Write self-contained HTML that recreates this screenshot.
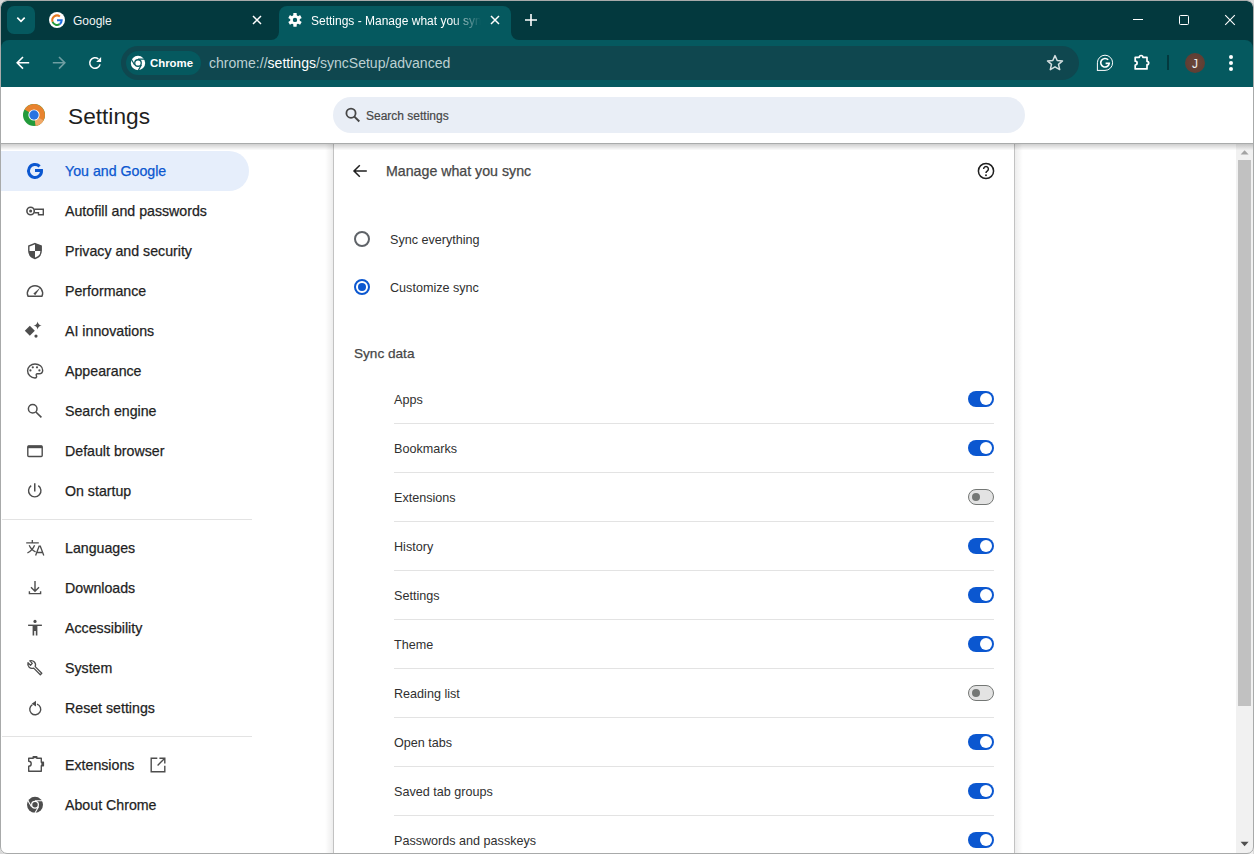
<!DOCTYPE html>
<html><head><meta charset="utf-8">
<style>
*{box-sizing:border-box;margin:0;padding:0}
html,body{width:1254px;height:854px;overflow:hidden;background:#d9d9d9;font-family:"Liberation Sans",sans-serif}
.a{position:absolute}
.t{white-space:nowrap}
svg{position:absolute;overflow:visible}
</style></head><body>
<div class="a" style="left:0px;top:0px;width:1254px;height:854px;background:#fff;border-radius:7px"></div>
<div class="a" style="left:1px;top:1px;width:1252px;height:52px;background:#03393e;border-radius:6px 6px 0 0"></div>
<div class="a" style="left:7px;top:6px;width:28px;height:28px;background:#05595f;border-radius:7px"></div>
<svg style="left:10px;top:10px" width="22" height="22" viewBox="10 10 22 22"><path d="M17.3 17.6L21 21.3L24.7 17.6" stroke="#fff" stroke-width="1.6" fill="none"/></svg>
<svg style="left:48px;top:11px" width="18" height="18" viewBox="48 11 18 18"><circle cx="57" cy="20" r="8" fill="#fff"/><path d="M59.89 16.5A4.7 4.7 0 0 0 52.61 21.88" stroke="#e67a22" stroke-width="2" fill="none"/><path d="M52.61 21.88A4.7 4.7 0 0 0 59.63 24.10" stroke="#239a3b" stroke-width="2" fill="none"/><path d="M59.63 24.10A4.7 4.7 0 0 0 61.7 20.2H57" stroke="#1f6fe0" stroke-width="2" fill="none"/></svg>
<div class="a t" style="left:73px;top:13.44px;font-size:12px;line-height:16px;color:#f1f4f4">Google</div>
<svg style="left:250px;top:13px" width="14" height="14" viewBox="250 13 14 14"><path d="M253 16L261 24M261 16L253 24" stroke="#fff" stroke-width="1.5"/></svg>
<div class="a" style="left:279px;top:6px;width:232px;height:40px;background:#05595f;border-radius:8px 8px 0 0"></div>
<svg style="left:270px;top:26px" width="260" height="16" viewBox="270 26 260 16"><path d="M271 41V40A8 8 0 0 0 279 32V41Z" fill="#05595f"/><path d="M519 41V40A8 8 0 0 1 511 32V41Z" fill="#05595f"/></svg>
<svg style="left:286px;top:11px" width="18" height="18" viewBox="286 11 18 18"><rect x="293.3" y="13.099999999999998" width="3.4" height="3.6" rx="0.4" transform="rotate(0 295 19.9)" fill="#fff"/><rect x="293.3" y="13.099999999999998" width="3.4" height="3.6" rx="0.4" transform="rotate(60 295 19.9)" fill="#fff"/><rect x="293.3" y="13.099999999999998" width="3.4" height="3.6" rx="0.4" transform="rotate(120 295 19.9)" fill="#fff"/><rect x="293.3" y="13.099999999999998" width="3.4" height="3.6" rx="0.4" transform="rotate(180 295 19.9)" fill="#fff"/><rect x="293.3" y="13.099999999999998" width="3.4" height="3.6" rx="0.4" transform="rotate(240 295 19.9)" fill="#fff"/><rect x="293.3" y="13.099999999999998" width="3.4" height="3.6" rx="0.4" transform="rotate(300 295 19.9)" fill="#fff"/><circle cx="295" cy="19.9" r="3.5" fill="none" stroke="#fff" stroke-width="2.6"/></svg>
<div class="a t" style="left:311px;top:13.44px;font-size:12px;line-height:16px;color:#fff;width:170px;overflow:hidden;-webkit-mask-image:linear-gradient(90deg,#000 140px,transparent 170px)">Settings - Manage what you sync</div>
<svg style="left:488px;top:13px" width="14" height="14" viewBox="488 13 14 14"><path d="M491 16L499 24M499 16L491 24" stroke="#fff" stroke-width="1.5"/></svg>
<svg style="left:523px;top:12px" width="16" height="16" viewBox="523 12 16 16"><path d="M531 14V26M525 20H537" stroke="#fff" stroke-width="1.6"/></svg>
<div class="a" style="left:1133px;top:19px;width:10px;height:1px;background:#fff"></div>
<div class="a" style="left:1179px;top:15px;width:10px;height:10px;border:1px solid #fff;border-radius:1.5px"></div>
<svg style="left:1222px;top:12px" width="16" height="16" viewBox="1222 12 16 16"><path d="M1225.2 15.2L1234.8 24.8M1234.8 15.2L1225.2 24.8" stroke="#fff" stroke-width="1.1"/></svg>
<div class="a" style="left:1px;top:40px;width:1252px;height:47px;background:#05595f;border-radius:8px 8px 0 0"></div>
<svg style="left:14px;top:54px" width="18" height="18" viewBox="14 54 18 18"><path d="M29.2 62.8H17.5M23 57L17.2 62.8L23 68.6" stroke="#fff" stroke-width="1.6" fill="none"/></svg>
<svg style="left:50px;top:54px" width="18" height="18" viewBox="50 54 18 18"><path d="M52.8 62.8H64.5M59 57L64.8 62.8L59 68.6" stroke="#6f9ea2" stroke-width="1.6" fill="none"/></svg>
<svg style="left:86px;top:54px" width="18" height="18" viewBox="86 54 18 18"><path d="M100.07 64.36A5.25 5.25 0 1 1 98.37 58.98" stroke="#fff" stroke-width="1.5" fill="none"/><path d="M96.1 61.9H101.1V56.9Z" fill="#fff"/></svg>
<div class="a" style="left:121px;top:46px;width:958px;height:34px;background:#0f474f;border-radius:17px"></div>
<div class="a" style="left:126px;top:51px;width:75px;height:24px;background:#05595f;border-radius:12px"></div>
<svg style="left:129px;top:54px" width="18" height="18" viewBox="129 54 18 18"><circle cx="138" cy="63" r="7.2" fill="#fff"/><circle cx="138" cy="63" r="3.9" fill="#05595f"/><circle cx="138" cy="63" r="2.6" fill="#fff"/><path d="M138 59.1H145.5M134.6 65L130.9 58.5M141.4 65L137.7 71.4" stroke="#05595f" stroke-width="1.2"/></svg>
<div class="a t" style="left:150px;top:54.65px;font-size:11.4px;line-height:16px;color:#fff;font-weight:bold">Chrome</div>
<div class="a t" style="left:209px;top:53.63px;font-size:14.05px;line-height:18px;color:#bcd0d2">chrome://<span style="color:#fff">settings</span>/syncSetup/advanced</div>
<svg style="left:1045px;top:53px" width="20" height="20" viewBox="1045 53 20 20"><path d="M1055 55.6L1057.2 60.5L1062.5 60.9L1058.5 64.4L1059.7 69.6L1055 66.8L1050.3 69.6L1051.5 64.4L1047.5 60.9L1052.8 60.5Z" stroke="#d5dfe0" stroke-width="1.5" fill="none" stroke-linejoin="round"/></svg>
<svg style="left:1094px;top:52px" width="22" height="22" viewBox="1094 52 22 22"><path d="M1097.4 70.8V62.8A7.6 7.6 0 1 1 1105 70.4H1097.4Z" stroke="#fff" stroke-width="1" fill="none"/><path d="M1108.2 59.8A4.3 4.3 0 1 0 1109.3 63.4H1105.6" stroke="#fff" stroke-width="1.6" fill="none"/></svg>
<svg style="left:1130px;top:52px" width="22" height="22" viewBox="1130 52 22 22"><path d="M1135.2 57.3H1139.3A1.8 1.8 0 0 1 1142.9 57.3H1147V61.3A1.7 1.7 0 0 1 1147 64.7V68.9H1135.2V65A1.9 1.9 0 0 0 1135.2 61.2Z" stroke="#fff" stroke-width="1.7" fill="none" stroke-linejoin="round"/></svg>
<div class="a" style="left:1167px;top:55px;width:2px;height:15px;background:#03393e"></div>
<div class="a" style="left:1185px;top:53px;width:20px;height:20px;background:radial-gradient(circle at 50% 50%,#6a463a,#5a3a30);border-radius:50%"></div>
<div class="a t" style="left:1185px;top:56.64px;font-size:12px;line-height:14px;color:#eee;width:20px;text-align:center">J</div>
<div class="a" style="left:1229px;top:55px;width:4px;height:4px;background:#fff;border-radius:50%"></div>
<div class="a" style="left:1229px;top:61px;width:4px;height:4px;background:#fff;border-radius:50%"></div>
<div class="a" style="left:1229px;top:67px;width:4px;height:4px;background:#fff;border-radius:50%"></div>
<svg style="left:22px;top:103px" width="24" height="24" viewBox="22 103 24 24"><circle cx="34" cy="115" r="11" fill="#239a3b"/><path d="M34 115L24.47 109.5A11 11 0 1 1 35.72 125.86Z" fill="#e8832f"/><path d="M34 115L43.53 120.5A11 11 0 0 1 35.72 125.86Z" fill="#f0a868"/><circle cx="34" cy="115" r="5.6" fill="#fff"/><circle cx="34" cy="115" r="4.7" fill="#2b74e0"/></svg>
<div class="a t" style="left:68px;top:103.13px;font-size:22.7px;line-height:26px;color:#1f1f1f">Settings</div>
<div class="a" style="left:333px;top:97px;width:692px;height:36px;background:#e9eef6;border-radius:18px"></div>
<svg style="left:343px;top:106px" width="18" height="18" viewBox="343 106 18 18"><circle cx="351" cy="113.2" r="4.6" stroke="#474747" stroke-width="1.8" fill="none"/><path d="M354.4 116.6L359.3 121.5" stroke="#474747" stroke-width="2"/></svg>
<div class="a t" style="left:366px;top:107.84px;font-size:12px;line-height:16px;color:#474747;-webkit-text-stroke:0.2px #474747">Search settings</div>
<div class="a" style="left:1236px;top:144px;width:17px;height:710px;background:#f1f1f1"></div>
<div class="a" style="left:1238px;top:160px;width:13px;height:546px;background:#c1c1c1"></div>
<svg style="left:1238px;top:148px" width="14" height="10" viewBox="1238 148 14 10"><path d="M1240.6 154.6L1244.6 150.2L1248.6 154.6Z" fill="#a3a3a3"/></svg>
<svg style="left:1238px;top:838px" width="14" height="10" viewBox="1238 838 14 10"><path d="M1240.6 841.8L1244.6 846.2L1248.6 841.8Z" fill="#505050"/></svg>
<div class="a" style="left:325px;top:144px;width:8px;height:710px;background:linear-gradient(90deg,rgba(0,0,0,0),rgba(0,0,0,0.07))"></div>
<div class="a" style="left:333px;top:144px;width:1px;height:710px;background:#c2c2c2"></div>
<div class="a" style="left:1014px;top:144px;width:1px;height:710px;background:#c2c2c2"></div>
<div class="a" style="left:1015px;top:144px;width:8px;height:710px;background:linear-gradient(90deg,rgba(0,0,0,0.07),rgba(0,0,0,0))"></div>
<div class="a" style="left:1px;top:143px;width:1252px;height:1px;background:#a9abab"></div>
<div class="a" style="left:1px;top:144px;width:1252px;height:6px;background:linear-gradient(rgba(0,0,0,0.19),rgba(0,0,0,0.01))"></div>
<div class="a" style="left:1px;top:151px;width:248px;height:40px;background:#e6eefb;border-radius:0 20px 20px 0"></div>
<div class="a" style="left:2px;top:519px;width:250px;height:1px;background:#e3e3e3"></div>
<div class="a" style="left:2px;top:736px;width:250px;height:1px;background:#e3e3e3"></div>
<div class="a t" style="left:65px;top:163.08px;font-size:14.2px;line-height:16px;color:#0b57d0;-webkit-text-stroke:0.25px #0b57d0">You and Google</div>
<div class="a t" style="left:65px;top:203.08px;font-size:14.2px;line-height:16px;color:#1f1f1f;-webkit-text-stroke:0.25px #1f1f1f">Autofill and passwords</div>
<div class="a t" style="left:65px;top:243.08px;font-size:14.2px;line-height:16px;color:#1f1f1f;-webkit-text-stroke:0.25px #1f1f1f">Privacy and security</div>
<div class="a t" style="left:65px;top:283.08px;font-size:14.2px;line-height:16px;color:#1f1f1f;-webkit-text-stroke:0.25px #1f1f1f">Performance</div>
<div class="a t" style="left:65px;top:323.08px;font-size:14.2px;line-height:16px;color:#1f1f1f;-webkit-text-stroke:0.25px #1f1f1f">AI innovations</div>
<div class="a t" style="left:65px;top:363.08px;font-size:14.2px;line-height:16px;color:#1f1f1f;-webkit-text-stroke:0.25px #1f1f1f">Appearance</div>
<div class="a t" style="left:65px;top:403.08px;font-size:14.2px;line-height:16px;color:#1f1f1f;-webkit-text-stroke:0.25px #1f1f1f">Search engine</div>
<div class="a t" style="left:65px;top:443.08px;font-size:14.2px;line-height:16px;color:#1f1f1f;-webkit-text-stroke:0.25px #1f1f1f">Default browser</div>
<div class="a t" style="left:65px;top:483.08px;font-size:14.2px;line-height:16px;color:#1f1f1f;-webkit-text-stroke:0.25px #1f1f1f">On startup</div>
<div class="a t" style="left:65px;top:540.08px;font-size:14.2px;line-height:16px;color:#1f1f1f;-webkit-text-stroke:0.25px #1f1f1f">Languages</div>
<div class="a t" style="left:65px;top:580.08px;font-size:14.2px;line-height:16px;color:#1f1f1f;-webkit-text-stroke:0.25px #1f1f1f">Downloads</div>
<div class="a t" style="left:65px;top:620.08px;font-size:14.2px;line-height:16px;color:#1f1f1f;-webkit-text-stroke:0.25px #1f1f1f">Accessibility</div>
<div class="a t" style="left:65px;top:660.08px;font-size:14.2px;line-height:16px;color:#1f1f1f;-webkit-text-stroke:0.25px #1f1f1f">System</div>
<div class="a t" style="left:65px;top:700.08px;font-size:14.2px;line-height:16px;color:#1f1f1f;-webkit-text-stroke:0.25px #1f1f1f">Reset settings</div>
<div class="a t" style="left:65px;top:757.08px;font-size:14.2px;line-height:16px;color:#1f1f1f;-webkit-text-stroke:0.25px #1f1f1f">Extensions</div>
<div class="a t" style="left:65px;top:797.08px;font-size:14.2px;line-height:16px;color:#1f1f1f;-webkit-text-stroke:0.25px #1f1f1f">About Chrome</div>
<svg style="left:24px;top:160px" width="22" height="22" viewBox="24 160 22 22"><path d="M39.6 166.4A6.5 6.5 0 1 0 41.5 170.6H35" stroke="#0b57d0" stroke-width="3" fill="none"/></svg>
<svg style="left:24px;top:200px" width="22" height="22" viewBox="24 200 22 22"><circle cx="30.6" cy="211" r="3.7" stroke="#4d4d4d" fill="none" stroke-width="1.6"/><circle cx="30.6" cy="211" r="1.5" fill="#4d4d4d"/><path d="M34.3 209.3H43.3V214.8H38.5V212.7H34.3" stroke="#4d4d4d" fill="none" stroke-width="1.4"/></svg>
<svg style="left:24px;top:240px" width="22" height="22" viewBox="24 240 22 22"><path d="M35 243.6L41.2 246V250.6C41.2 254.4 38.7 257.4 35 258.5C31.3 257.4 28.8 254.4 28.8 250.6V246Z" stroke="#4d4d4d" fill="none" stroke-width="1.4"/><path d="M35 243.6L41.2 246V251H35Z" fill="#4d4d4d"/><path d="M28.8 251H35V258.5C31.3 257.4 28.8 254.4 28.8 251Z" fill="#4d4d4d"/></svg>
<svg style="left:24px;top:280px" width="22" height="22" viewBox="24 280 22 22"><path d="M28 296.3A7.6 7.6 0 1 1 42 296.3Z" stroke="#4d4d4d" fill="none" stroke-width="1.5" stroke-linejoin="round"/><path d="M33.4 293.4L40.4 287.6L35.2 295.2Z" fill="#4d4d4d"/></svg>
<svg style="left:22px;top:318px" width="22" height="22" viewBox="22 318 22 22"><path d="M24.8 330.8L29.8 325.8L34.8 330.8L29.8 335.8Z" fill="#4d4d4d"/><path d="M37.6 321.4Q38.1 325 41.7 325.5Q38.1 326 37.6 329.6Q37.1 326 33.5 325.5Q37.1 325 37.6 321.4Z" fill="#4d4d4d"/><circle cx="36" cy="336.1" r="1.6" fill="#4d4d4d"/></svg>
<svg style="left:24px;top:360px" width="22" height="22" viewBox="24 360 22 22"><path d="M35 364C39.3 364 42.7 366.8 42.7 370.2C42.7 372.6 40.9 373.7 39 373.7H37.4C36.3 373.7 35.8 374.8 36.4 375.7C37 376.6 36.5 378 35 378C30.9 378 27.6 374.7 27.6 370.8C27.6 366.9 30.8 364 35 364Z" stroke="#4d4d4d" fill="none" stroke-width="1.4"/><circle cx="30.4" cy="370.4" r="1.1" fill="#4d4d4d"/><circle cx="32.8" cy="367.3" r="1.1" fill="#4d4d4d"/><circle cx="37" cy="367.3" r="1.1" fill="#4d4d4d"/><circle cx="39.4" cy="370.4" r="1.1" fill="#4d4d4d"/></svg>
<svg style="left:24px;top:400px" width="22" height="22" viewBox="24 400 22 22"><circle cx="32.7" cy="408.8" r="4.3" stroke="#4d4d4d" fill="none" stroke-width="1.5"/><path d="M35.9 412L41.4 417.3" stroke="#4d4d4d" fill="none" stroke-width="1.6"/></svg>
<svg style="left:24px;top:440px" width="22" height="22" viewBox="24 440 22 22"><rect x="27.8" y="445.9" width="14.4" height="10.6" rx="1" stroke="#4d4d4d" fill="none" stroke-width="1.4"/><rect x="27.8" y="445.6" width="14.4" height="2.6" fill="#4d4d4d"/></svg>
<svg style="left:24px;top:480px" width="22" height="22" viewBox="24 480 22 22"><path d="M31.2 485.6A6.2 6.2 0 1 0 38.3 485.6" stroke="#4d4d4d" fill="none" stroke-width="1.4"/><path d="M34.75 483.2V491.6" stroke="#4d4d4d" fill="none" stroke-width="1.5"/></svg>
<svg style="left:24px;top:536px" width="22" height="22" viewBox="24 536 22 22"><path d="M26.2 542.8H38.8M32.3 540V542.8M29.2 545.2C30.5 548.2 32.7 550.6 35.6 551.8M34.6 545.2C33.3 548.5 30.8 551.2 27.4 553" stroke="#4d4d4d" fill="none" stroke-width="1.3"/><path d="M35.6 555.6L39.1 546.2H40.3L43.8 555.6M36.8 552.5H42.6" stroke="#4d4d4d" fill="none" stroke-width="1.3"/></svg>
<svg style="left:24px;top:576px" width="22" height="22" viewBox="24 576 22 22"><path d="M35 581V591.2M31 587.3L35 591.3L39 587.3M29.4 591.3V593.6H40.6V591.3" stroke="#4d4d4d" fill="none" stroke-width="1.4"/></svg>
<svg style="left:24px;top:616px" width="22" height="22" viewBox="24 616 22 22"><circle cx="35" cy="621.4" r="1.6" fill="#4d4d4d"/><rect x="28.1" y="624.6" width="13.8" height="1.4" fill="#4d4d4d"/><path d="M32.6 625H37.4V635.6H35.8V631H34.2V635.6H32.6Z" fill="#4d4d4d"/></svg>
<svg style="left:24px;top:656px" width="22" height="22" viewBox="24 656 22 22"><path d="M41.8 673.2L35.2 666.6A4.3 4.3 0 0 0 29.8 660.9L32.3 663.4L30.5 665.3L28 662.8A4.3 4.3 0 0 0 33.7 668.1L40.3 674.7Z" stroke="#4d4d4d" fill="none" stroke-width="1.3" stroke-linejoin="round"/></svg>
<svg style="left:24px;top:696px" width="22" height="22" viewBox="24 696 22 22"><path d="M37 704.1A5.5 5.5 0 1 1 32.4 704.6" stroke="#4d4d4d" fill="none" stroke-width="1.4"/><path d="M36 700.8V706.6L31.7 703.7Z" fill="#4d4d4d"/></svg>
<svg style="left:24px;top:752px" width="24" height="22" viewBox="24 752 24 22"><path d="M28.7 758.2H33.2V756.6H36.8V758.2H41.3V762.2H43.4V765.8H41.3V771.3H28.7V766.3A2.4 2.4 0 0 0 28.7 761.3Z" stroke="#4d4d4d" fill="none" stroke-width="1.4" stroke-linejoin="round"/><rect x="33.2" y="756" width="3.6" height="2.2" fill="#4d4d4d"/><rect x="41.3" y="762.2" width="2.6" height="3.6" fill="#4d4d4d"/></svg>
<svg style="left:146px;top:754px" width="24" height="22" viewBox="146 754 24 22"><path d="M157.3 758.2H151.2V771.8H164.8V765.7M159.4 758.2H164.8V763.6M164.8 758.2L157.6 765.4" stroke="#4d4d4d" fill="none" stroke-width="1.4"/></svg>
<svg style="left:24px;top:794px" width="22" height="22" viewBox="24 794 22 22"><circle cx="35" cy="804.8" r="8" fill="#4d4d4d"/><circle cx="35" cy="804.8" r="4" fill="#fff"/><circle cx="35" cy="804.8" r="2.7" fill="#4d4d4d"/><path d="M35 800.8H42.6M31.5 806.8L27.7 800.2M38.5 806.8L34.7 813.4" stroke="#fff" stroke-width="1.1"/></svg>
<svg style="left:350px;top:162px" width="20" height="18" viewBox="350 162 20 18"><path d="M366.8 171H354.5M359.8 165.3L354 171L359.8 176.7" stroke="#1f1f1f" stroke-width="1.5" fill="none"/></svg>
<div class="a t" style="left:386px;top:163.28px;font-size:14.2px;line-height:16px;color:#474747;-webkit-text-stroke:0.25px #474747">Manage what you sync</div>
<svg style="left:975px;top:160px" width="22" height="22" viewBox="975 160 22 22"><circle cx="986" cy="171" r="7.6" stroke="#1f1f1f" stroke-width="1.5" fill="none"/><path d="M983.6 169A2.4 2.4 0 1 1 987.2 171.1C986.3 171.6 986 172.1 986 173" stroke="#1f1f1f" stroke-width="1.5" fill="none"/><circle cx="986" cy="175.3" r="0.95" fill="#1f1f1f"/></svg>
<svg style="left:352px;top:229px" width="20" height="20" viewBox="352 229 20 20"><circle cx="362" cy="239" r="7" stroke="#5f6368" stroke-width="2" fill="none"/></svg>
<div class="a t" style="left:390px;top:232.23px;font-size:12.6px;line-height:16px;color:#303030">Sync everything</div>
<svg style="left:352px;top:277px" width="20" height="20" viewBox="352 277 20 20"><circle cx="362" cy="287" r="7" stroke="#0b57d0" stroke-width="2" fill="none"/><circle cx="362" cy="287" r="4" fill="#0b57d0"/></svg>
<div class="a t" style="left:390px;top:280.23px;font-size:12.6px;line-height:16px;color:#303030">Customize sync</div>
<div class="a t" style="left:354px;top:345.59px;font-size:13.6px;line-height:16px;color:#474747;-webkit-text-stroke:0.25px #474747">Sync data</div>
<div class="a t" style="left:394px;top:391.63px;font-size:12.6px;line-height:16px;color:#303030">Apps</div>
<div class="a" style="left:968px;top:391px;width:26px;height:16px;background:#0b57d0;border-radius:8px"></div>
<div class="a" style="left:980px;top:393px;width:12px;height:12px;background:#fff;border-radius:50%"></div>
<div class="a" style="left:394px;top:423px;width:600px;height:1px;background:#e3e3e3"></div>
<div class="a t" style="left:394px;top:440.63px;font-size:12.6px;line-height:16px;color:#303030">Bookmarks</div>
<div class="a" style="left:968px;top:440px;width:26px;height:16px;background:#0b57d0;border-radius:8px"></div>
<div class="a" style="left:980px;top:442px;width:12px;height:12px;background:#fff;border-radius:50%"></div>
<div class="a" style="left:394px;top:472px;width:600px;height:1px;background:#e3e3e3"></div>
<div class="a t" style="left:394px;top:489.63px;font-size:12.6px;line-height:16px;color:#303030">Extensions</div>
<div class="a" style="left:968px;top:489px;width:26px;height:16px;background:#e3e3e3;border:1px solid #747775;border-radius:8px"></div>
<div class="a" style="left:972px;top:493px;width:8px;height:8px;background:#747775;border-radius:50%"></div>
<div class="a" style="left:394px;top:521px;width:600px;height:1px;background:#e3e3e3"></div>
<div class="a t" style="left:394px;top:538.63px;font-size:12.6px;line-height:16px;color:#303030">History</div>
<div class="a" style="left:968px;top:538px;width:26px;height:16px;background:#0b57d0;border-radius:8px"></div>
<div class="a" style="left:980px;top:540px;width:12px;height:12px;background:#fff;border-radius:50%"></div>
<div class="a" style="left:394px;top:570px;width:600px;height:1px;background:#e3e3e3"></div>
<div class="a t" style="left:394px;top:587.63px;font-size:12.6px;line-height:16px;color:#303030">Settings</div>
<div class="a" style="left:968px;top:587px;width:26px;height:16px;background:#0b57d0;border-radius:8px"></div>
<div class="a" style="left:980px;top:589px;width:12px;height:12px;background:#fff;border-radius:50%"></div>
<div class="a" style="left:394px;top:619px;width:600px;height:1px;background:#e3e3e3"></div>
<div class="a t" style="left:394px;top:636.63px;font-size:12.6px;line-height:16px;color:#303030">Theme</div>
<div class="a" style="left:968px;top:636px;width:26px;height:16px;background:#0b57d0;border-radius:8px"></div>
<div class="a" style="left:980px;top:638px;width:12px;height:12px;background:#fff;border-radius:50%"></div>
<div class="a" style="left:394px;top:668px;width:600px;height:1px;background:#e3e3e3"></div>
<div class="a t" style="left:394px;top:685.63px;font-size:12.6px;line-height:16px;color:#303030">Reading list</div>
<div class="a" style="left:968px;top:685px;width:26px;height:16px;background:#e3e3e3;border:1px solid #747775;border-radius:8px"></div>
<div class="a" style="left:972px;top:689px;width:8px;height:8px;background:#747775;border-radius:50%"></div>
<div class="a" style="left:394px;top:717px;width:600px;height:1px;background:#e3e3e3"></div>
<div class="a t" style="left:394px;top:734.63px;font-size:12.6px;line-height:16px;color:#303030">Open tabs</div>
<div class="a" style="left:968px;top:734px;width:26px;height:16px;background:#0b57d0;border-radius:8px"></div>
<div class="a" style="left:980px;top:736px;width:12px;height:12px;background:#fff;border-radius:50%"></div>
<div class="a" style="left:394px;top:766px;width:600px;height:1px;background:#e3e3e3"></div>
<div class="a t" style="left:394px;top:783.63px;font-size:12.6px;line-height:16px;color:#303030">Saved tab groups</div>
<div class="a" style="left:968px;top:783px;width:26px;height:16px;background:#0b57d0;border-radius:8px"></div>
<div class="a" style="left:980px;top:785px;width:12px;height:12px;background:#fff;border-radius:50%"></div>
<div class="a" style="left:394px;top:815px;width:600px;height:1px;background:#e3e3e3"></div>
<div class="a t" style="left:394px;top:832.63px;font-size:12.6px;line-height:16px;color:#303030">Passwords and passkeys</div>
<div class="a" style="left:968px;top:832px;width:26px;height:16px;background:#0b57d0;border-radius:8px"></div>
<div class="a" style="left:980px;top:834px;width:12px;height:12px;background:#fff;border-radius:50%"></div>
<div class="a" style="left:0px;top:0px;width:1254px;height:854px;border:1px solid #a8aaaa;border-radius:7px;background:transparent"></div>
</body></html>
